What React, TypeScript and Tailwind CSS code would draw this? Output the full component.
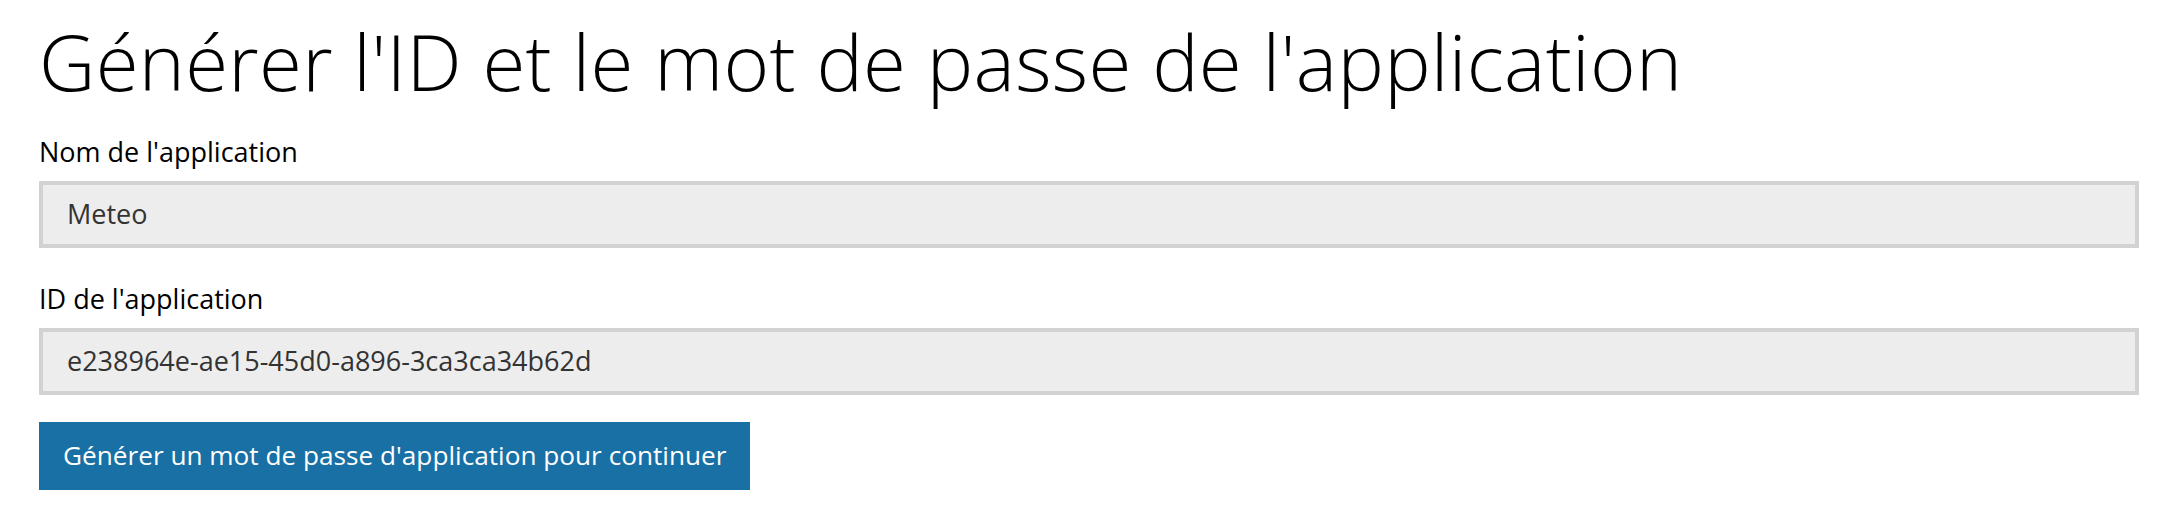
const fieldBox =
  "flex h-[67px] w-full items-center border-4 border-[#d2d2d2] bg-[#ededed] px-6 text-[27px] text-[#333333]";

function Field({ label, value }: { label: string; value: string }) {
  return (
    <div className="flex flex-col gap-[11px]">
      <label className="text-[27px] leading-[36px] text-black">{label}</label>
      <div className={fieldBox}>{value}</div>
    </div>
  );
}

export default function App() {
  return (
    <div
      className="min-h-[532px] bg-white pl-[39px] pr-[45px] pt-[15px]"
      style={{ fontFamily: '"Open Sans", "Noto Sans", sans-serif' }}
    >
      <h1 className="text-[78px] font-light leading-[92px] tracking-[0.3px] text-black">
        Générer l'ID et le mot de passe de l'application
      </h1>
      <div className="mt-[27px] flex flex-col gap-[33px]">
        <Field label="Nom de l'application" value="Meteo" />
        <Field label="ID de l'application" value="e238964e-ae15-45d0-a896-3ca3ca34b62d" />
      </div>
      <button
        type="button"
        className="mt-[27px] flex h-[68px] items-center whitespace-nowrap bg-[#1870a5] px-6 text-[26.2px] text-white"
      >
        Générer un mot de passe d'application pour continuer
      </button>
    </div>
  );
}
